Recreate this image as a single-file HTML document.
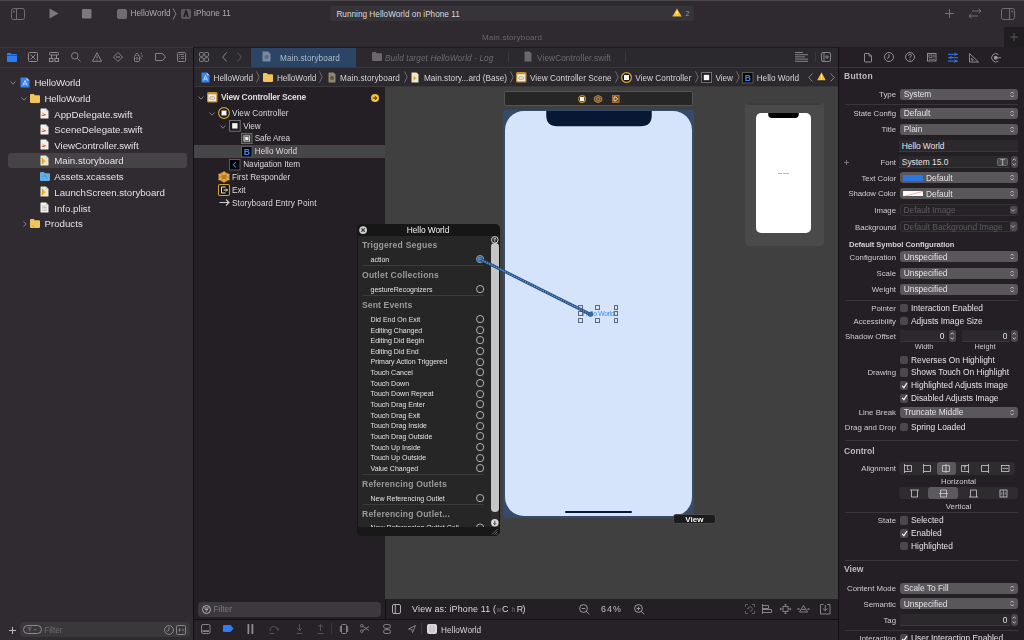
<!DOCTYPE html>
<html><head><meta charset="utf-8">
<style>
*{margin:0;padding:0;box-sizing:border-box}
html,body{width:1024px;height:640px;overflow:hidden;background:#2b292d;font-family:"Liberation Sans",sans-serif;color:#dfdddf;position:relative}
.a{position:absolute}
.t{position:absolute;white-space:pre;line-height:1}
svg{position:absolute;overflow:visible}
</style></head><body><div style="position:absolute;left:0;top:0;width:1024px;height:640px;overflow:hidden;filter:grayscale(0.0001)">
<div class="a" style="left:0px;top:0px;width:1024px;height:1px;background:#4a484b;border-radius:0px;"></div>
<div class="a" style="left:0px;top:1px;width:1024px;height:46px;background:#2e2a2f;border-radius:0px;"></div>
<div class="a" style="left:0px;top:47px;width:193px;height:593px;background:#2f2b30;border-radius:0px;"></div>
<div class="a" style="left:0px;top:47px;width:193px;height:1px;background:#3b383c;border-radius:0px;"></div>
<div class="a" style="left:0px;top:67px;width:193px;height:1px;background:#3b383c;border-radius:0px;"></div>
<div class="a" style="left:193px;top:47px;width:1px;height:593px;background:#121013;border-radius:0px;"></div>
<div class="a" style="left:194px;top:47px;width:644px;height:40px;background:#2c292e;border-radius:0px;"></div>
<div class="a" style="left:194px;top:47px;width:644px;height:1px;background:#1c1a1d;border-radius:0px;"></div>
<div class="a" style="left:194px;top:67px;width:644px;height:1px;background:#3a373b;border-radius:0px;"></div>
<div class="a" style="left:194px;top:86px;width:644px;height:1px;background:#3a373b;border-radius:0px;"></div>
<div class="a" style="left:194px;top:87px;width:191px;height:532px;background:#231f24;border-radius:0px;"></div>
<div class="a" style="left:194px;top:145px;width:191px;height:13px;background:#464547;border-radius:0px;"></div>
<div class="a" style="left:385px;top:87px;width:453px;height:512px;background:#404040;border-radius:0px;"></div>
<div class="a" style="left:385px;top:599px;width:453px;height:20px;background:#231f24;border-radius:0px;"></div>
<div class="a" style="left:385px;top:599px;width:1px;height:20px;background:#121013;border-radius:0px;"></div>
<div class="a" style="left:194px;top:619px;width:644px;height:1px;background:#121013;border-radius:0px;"></div>
<div class="a" style="left:194px;top:620px;width:644px;height:20px;background:#262227;border-radius:0px;"></div>
<div class="a" style="left:838px;top:47px;width:1px;height:593px;background:#121013;border-radius:0px;"></div>
<div class="a" style="left:839px;top:47px;width:185px;height:593px;background:#241f25;border-radius:0px;"></div>
<div class="a" style="left:839px;top:67px;width:185px;height:1px;background:#3a373b;border-radius:0px;"></div>
<svg style="left:11px;top:8px" width="14" height="12" viewBox="0 0 14 12"><rect x="0.5" y="0.5" width="13" height="11" rx="2" fill="none" stroke="#6e6c6f"/><line x1="5.5" y1="1" x2="5.5" y2="11" stroke="#6e6c6f"/><rect x="2" y="2.5" width="1.5" height="2" fill="#6e6c6f"/></svg>
<svg style="left:49px;top:8px" width="10" height="11" viewBox="0 0 10 11"><path d="M0.5 0.5 L9.5 5.5 L0.5 10.5Z" fill="#7b797c"/></svg>
<svg style="left:82px;top:9px" width="10" height="10" viewBox="0 0 10 10"><rect x="0" y="0" width="9.5" height="9.5" rx="1" fill="#7b797c"/></svg>
<svg style="left:117px;top:9px" width="10" height="10" viewBox="0 0 10 10"><rect x="0" y="0" width="10" height="10" rx="2" fill="#6f6d71"/></svg>
<div class="t" style="left:130.50px;top:10.00px;font-size:8.2px;color:#aeacaf;letter-spacing:0.031px;">HelloWorld</div>
<svg style="left:172px;top:8px" width="5" height="12" viewBox="0 0 5 12"><path d="M1 0.5 L4 6 L1 11.5" fill="none" stroke="#8a888b" stroke-width="0.9"/></svg>
<svg style="left:181px;top:9px" width="10" height="10" viewBox="0 0 10 10"><rect x="0" y="0" width="10" height="10" rx="2" fill="#5b595c"/><path d="M3 8 L5 2 L7 8" fill="none" stroke="#1e1c1f" stroke-width="1.6"/></svg>
<div class="t" style="left:194.00px;top:10.00px;font-size:8.2px;color:#aeacaf;letter-spacing:0.080px;">iPhone 11</div>
<div class="a" style="left:330px;top:6px;width:364px;height:15px;background:#363438;border-radius:3px;"></div>
<div class="t" style="left:336.40px;top:11.00px;font-size:8.2px;color:#dcdadd;letter-spacing:0.026px;">Running HelloWorld on iPhone 11</div>
<svg style="left:672px;top:8px" width="10" height="9" viewBox="0 0 10 9"><path d="M5 0.5 L9.7 8.5 L0.3 8.5Z" fill="#f0be3a"/><rect x="4.5" y="3" width="1" height="3" fill="#fff"/><rect x="4.5" y="6.8" width="1" height="1" fill="#fff"/></svg>
<div class="t" style="left:685.50px;top:10.00px;font-size:7.2px;color:#9c9a9d;">2</div>
<svg style="left:945px;top:9px" width="9" height="9" viewBox="0 0 9 9"><path d="M4.5 0 V9 M0 4.5 H9" stroke="#79777a" stroke-width="0.9"/></svg>
<svg style="left:968px;top:8px" width="14" height="11" viewBox="0 0 14 11"><path d="M4 3 H13 L10.5 0.7 M13 3 L10.5 5.3 M10 8 H1 L3.5 5.7 M1 8 L3.5 10.3" fill="none" stroke="#79777a" stroke-width="0.9"/></svg>
<svg style="left:1001px;top:8px" width="14" height="12" viewBox="0 0 14 12"><rect x="0.5" y="0.5" width="13" height="11" rx="2" fill="none" stroke="#6e6c6f"/><line x1="8.5" y1="1" x2="8.5" y2="11" stroke="#6e6c6f"/><rect x="10.3" y="2.5" width="1.5" height="2" fill="#6e6c6f"/></svg>
<div class="t" style="left:481.90px;top:34.00px;font-size:8.0px;color:#69676a;letter-spacing:0.196px;">Main.storyboard</div>
<div class="a" style="left:1004px;top:27px;width:20px;height:20px;background:#1f1d20;border-radius:0px;"></div>
<svg style="left:1010px;top:33px" width="8" height="8" viewBox="0 0 8 8"><path d="M4 0 V8 M0 4 H8" stroke="#5f5d60" stroke-width="0.9"/></svg>
<svg style="left:7px;top:53px" width="10" height="9" viewBox="0 0 10 9"><path d="M0 1 Q0 0 1 0 H3.5 L4.5 1 H9 Q10 1 10 2 V8 Q10 9 9 9 H1 Q0 9 0 8Z" fill="#2f7cf6"/><line x1="0" y1="2.5" x2="10" y2="2.5" stroke="#2d2a2e" stroke-width="0.5"/></svg>
<svg style="left:28px;top:52px" width="10" height="10" viewBox="0 0 10 10"><rect x="0.5" y="0.5" width="9" height="9" rx="1" fill="none" stroke="#8f8d90"/><path d="M2.5 2.5 L7.5 7.5 M7.5 2.5 L2.5 7.5" stroke="#8f8d90" stroke-width="0.9"/></svg>
<svg style="left:49px;top:52px" width="10" height="10" viewBox="0 0 10 10"><rect x="0.5" y="0.5" width="9" height="2.5" rx="1" fill="none" stroke="#8f8d90"/><path d="M2.5 3 V6 M7.5 3 V6" stroke="#8f8d90"/><rect x="0.5" y="6.5" width="3.5" height="3" fill="none" stroke="#8f8d90"/><rect x="6" y="6.5" width="3.5" height="3" fill="none" stroke="#8f8d90"/></svg>
<svg style="left:71px;top:52px" width="10" height="10" viewBox="0 0 10 10"><circle cx="3.8" cy="3.8" r="3.3" fill="none" stroke="#8f8d90" stroke-width="0.9"/><line x1="6.2" y1="6.2" x2="9.5" y2="9.5" stroke="#8f8d90" stroke-width="0.9"/></svg>
<svg style="left:92px;top:52px" width="10" height="10" viewBox="0 0 10 10"><path d="M5 0.7 L9.6 9.3 H0.4Z" fill="none" stroke="#8f8d90" stroke-width="0.9"/><path d="M5 3.5 V6.5 M5 7.5 V8.3" stroke="#8f8d90" stroke-width="0.9"/></svg>
<svg style="left:113px;top:52px" width="10" height="10" viewBox="0 0 10 10"><path d="M5 0.5 L9.5 5 L5 9.5 L0.5 5Z" fill="none" stroke="#8f8d90" stroke-width="0.9"/><line x1="3" y1="5" x2="7" y2="5" stroke="#8f8d90"/></svg>
<svg style="left:134px;top:51px" width="11" height="11" viewBox="0 0 11 11"><rect x="0.5" y="4.5" width="5" height="6" rx="1" fill="none" stroke="#8f8d90" stroke-width="0.9"/><path d="M2 4.5 V2.5 H4 V4.5 M6.5 3 L8 2 M7 5 H9 M6.5 7 L8 8" stroke="#8f8d90" stroke-width="0.8"/><circle cx="3" cy="7.5" r="1" fill="none" stroke="#8f8d90" stroke-width="0.7"/></svg>
<svg style="left:155px;top:53px" width="11" height="8" viewBox="0 0 11 8"><path d="M1 0.5 H7.5 L10.5 4 L7.5 7.5 H1 Q0.5 7.5 0.5 7 V1 Q0.5 0.5 1 0.5Z" fill="none" stroke="#8f8d90" stroke-width="0.9"/></svg>
<svg style="left:177px;top:52px" width="9" height="10" viewBox="0 0 9 10"><rect x="0.5" y="0.5" width="8" height="9" rx="1" fill="none" stroke="#8f8d90" stroke-width="0.9"/><path d="M2 2.5 H7 M2 4.5 H3 M4 4.5 H7 M2 6.5 H3 M4 6.5 H7" stroke="#8f8d90" stroke-width="0.8"/></svg>
<div class="a" style="left:7.5px;top:153px;width:179px;height:15px;background:#464347;border-radius:3px;"></div>
<svg style="left:10px;top:81px" width="6" height="4" viewBox="0 0 6 4"><path d="M0.5 0.5 L3 3.2 L5.5 0.5" fill="none" stroke="#8a888b" stroke-width="0.9"/></svg>
<svg style="left:20px;top:77px" width="10" height="11" viewBox="0 0 10 11"><path d="M0.5 1.2 Q0.5 0.5 1.2 0.5 H6.5 L9.5 3.5 V10 Q9.5 10.5 9 10.5 H1 Q0.5 10.5 0.5 10Z" fill="#3b82e8"/><path d="M6.5 0.5 V3.5 H9.5Z" fill="#a9c9f4"/><path d="M2.8 8.5 L5 3.5 L7.2 8.5 M3.5 7 H6.5" fill="none" stroke="#d9e8fb" stroke-width="0.8"/></svg>
<div class="t" style="left:34.50px;top:78.00px;font-size:9.7px;color:#e4e2e5;letter-spacing:-0.130px;">HelloWorld</div>
<svg style="left:20.5px;top:97px" width="6" height="4" viewBox="0 0 6 4"><path d="M0.5 0.5 L3 3.2 L5.5 0.5" fill="none" stroke="#8a888b" stroke-width="0.9"/></svg>
<svg style="left:30px;top:94px" width="10" height="9" viewBox="0 0 10 9"><path d="M0 1 Q0 0 1 0 H3.8 L4.8 1.2 H9 Q10 1.2 10 2.2 V8 Q10 9 9 9 H1 Q0 9 0 8Z" fill="#f1c55c"/></svg>
<div class="t" style="left:44.50px;top:94.00px;font-size:9.7px;color:#e4e2e5;letter-spacing:-0.130px;">HelloWorld</div>
<svg style="left:40px;top:108.0px" width="9" height="11" viewBox="0 0 9 11"><path d="M0.5 1 Q0.5 0.5 1 0.5 H6 L8.5 3 V10 Q8.5 10.5 8 10.5 H1 Q0.5 10.5 0.5 10Z" fill="#f3f1f1"/><path d="M6 0.5 V3 H8.5" fill="#c9c7c8"/><path d="M2 4 Q4.5 7 6.5 6 Q5.5 8.5 2.5 8 Q1.5 7.5 1.5 6.5 Q3 7 4 6.5 Q2.5 5.5 2 4Z" fill="#ec5a35"/></svg>
<div class="t" style="left:54.25px;top:110.00px;font-size:9.7px;color:#e4e2e5;">AppDelegate.swift</div>
<svg style="left:40px;top:123.65px" width="9" height="11" viewBox="0 0 9 11"><path d="M0.5 1 Q0.5 0.5 1 0.5 H6 L8.5 3 V10 Q8.5 10.5 8 10.5 H1 Q0.5 10.5 0.5 10Z" fill="#f3f1f1"/><path d="M6 0.5 V3 H8.5" fill="#c9c7c8"/><path d="M2 4 Q4.5 7 6.5 6 Q5.5 8.5 2.5 8 Q1.5 7.5 1.5 6.5 Q3 7 4 6.5 Q2.5 5.5 2 4Z" fill="#ec5a35"/></svg>
<div class="t" style="left:54.25px;top:125.00px;font-size:9.7px;color:#e4e2e5;">SceneDelegate.swift</div>
<svg style="left:40px;top:139.3px" width="9" height="11" viewBox="0 0 9 11"><path d="M0.5 1 Q0.5 0.5 1 0.5 H6 L8.5 3 V10 Q8.5 10.5 8 10.5 H1 Q0.5 10.5 0.5 10Z" fill="#f3f1f1"/><path d="M6 0.5 V3 H8.5" fill="#c9c7c8"/><path d="M2 4 Q4.5 7 6.5 6 Q5.5 8.5 2.5 8 Q1.5 7.5 1.5 6.5 Q3 7 4 6.5 Q2.5 5.5 2 4Z" fill="#ec5a35"/></svg>
<div class="t" style="left:54.25px;top:141.00px;font-size:9.7px;color:#e4e2e5;">ViewController.swift</div>
<svg style="left:40px;top:155.0px" width="9" height="11" viewBox="0 0 9 11"><path d="M0.5 1 Q0.5 0.5 1 0.5 H6 L8.5 3 V10 Q8.5 10.5 8 10.5 H1 Q0.5 10.5 0.5 10Z" fill="#f0e6c8"/><path d="M6 0.5 V3 H8.5" fill="#c9c7c8"/><path d="M3 4 L6 6 L3 8.5Z" fill="#e7b93c"/><rect x="2" y="3" width="1" height="6" fill="#c99a2e"/></svg>
<div class="t" style="left:54.25px;top:156.00px;font-size:9.7px;color:#e4e2e5;">Main.storyboard</div>
<svg style="left:40px;top:172px" width="10" height="9" viewBox="0 0 10 9"><path d="M0 1 Q0 0 1 0 H3.8 L4.8 1.2 H9 Q10 1.2 10 2.2 V8 Q10 9 9 9 H1 Q0 9 0 8Z" fill="#5fb0e9"/></svg>
<svg style="left:42px;top:175px" width="6" height="4" viewBox="0 0 6 4"><path d="M0.5 2 L2.5 0.5 L5.5 3" fill="none" stroke="#2c7cc0" stroke-width="0.6"/></svg>
<div class="t" style="left:54.25px;top:172.00px;font-size:9.7px;color:#e4e2e5;">Assets.xcassets</div>
<svg style="left:40px;top:186.3px" width="9" height="11" viewBox="0 0 9 11"><path d="M0.5 1 Q0.5 0.5 1 0.5 H6 L8.5 3 V10 Q8.5 10.5 8 10.5 H1 Q0.5 10.5 0.5 10Z" fill="#f0e6c8"/><path d="M6 0.5 V3 H8.5" fill="#c9c7c8"/><path d="M3 4 L6 6 L3 8.5Z" fill="#e7b93c"/><rect x="2" y="3" width="1" height="6" fill="#c99a2e"/></svg>
<div class="t" style="left:54.25px;top:188.00px;font-size:9.7px;color:#e4e2e5;letter-spacing:-0.011px;">LaunchScreen.storyboard</div>
<svg style="left:40px;top:202.0px" width="9" height="11" viewBox="0 0 9 11"><path d="M0.5 1 Q0.5 0.5 1 0.5 H6 L8.5 3 V10 Q8.5 10.5 8 10.5 H1 Q0.5 10.5 0.5 10Z" fill="#f3f1f1"/><path d="M6 0.5 V3 H8.5" fill="#c9c7c8"/><path d="M2 4 H7 M2 5.5 H7 M2 7 H7 M2 8.5 H7" stroke="#bdbbbc" stroke-width="0.8"/></svg>
<div class="t" style="left:54.25px;top:204.00px;font-size:9.7px;color:#e4e2e5;">Info.plist</div>
<svg style="left:23px;top:221px" width="4" height="6" viewBox="0 0 4 6"><path d="M0.5 0.5 L3.2 3 L0.5 5.5" fill="none" stroke="#8a888b" stroke-width="0.9"/></svg>
<svg style="left:30px;top:219px" width="10" height="9" viewBox="0 0 10 9"><path d="M0 1 Q0 0 1 0 H3.8 L4.8 1.2 H9 Q10 1.2 10 2.2 V8 Q10 9 9 9 H1 Q0 9 0 8Z" fill="#f1c55c"/></svg>
<svg style="left:32px;top:225px" width="3" height="3" viewBox="0 0 3 3"><path d="M0.5 0.5 L2 2.5" stroke="#9a7a2a" stroke-width="0.6"/></svg>
<div class="t" style="left:44.50px;top:219.00px;font-size:9.7px;color:#e4e2e5;">Products</div>
<svg style="left:9px;top:626.5px" width="7" height="7" viewBox="0 0 7 7"><path d="M3.5 0 V7 M0 3.5 H7" stroke="#bdbbbe" stroke-width="1"/></svg>
<div class="a" style="left:20px;top:622px;width:170px;height:15px;background:#3a383b;border-radius:4px;"></div>
<div class="a" style="left:23px;top:625px;width:19px;height:9px;background:none;border-radius:5px;border:1px solid #8e8c8f"></div>
<svg style="left:27px;top:627px" width="12" height="6" viewBox="0 0 12 6"><path d="M0.5 0.8 H4.5 M1.3 2.4 H3.7 M2 4 H3 M7 2 L8.3 3.3 L9.6 2" fill="none" stroke="#8e8c8f" stroke-width="0.7"/></svg>
<div class="t" style="left:44.30px;top:627.00px;font-size:8.2px;color:#6f6d70;letter-spacing:-0.001px;">Filter</div>
<svg style="left:164px;top:625px" width="10" height="10" viewBox="0 0 10 10"><circle cx="5" cy="5" r="4.4" fill="none" stroke="#9a989b" stroke-width="0.8"/><path d="M5 2 V5 L3 6.5" fill="none" stroke="#9a989b" stroke-width="0.8"/></svg>
<svg style="left:176px;top:625px" width="10" height="10" viewBox="0 0 10 10"><rect x="0.5" y="0.5" width="9" height="9" rx="1" fill="none" stroke="#9a989b" stroke-width="0.8"/><path d="M2.5 5 H4.5 M3.5 3.5 V6.5 M6 5 H8" stroke="#9a989b" stroke-width="0.8"/></svg>
<svg style="left:199px;top:52px" width="10" height="10" viewBox="0 0 10 10"><rect x="0.5" y="0.5" width="3.8" height="3.8" rx="0.8" fill="none" stroke="#8f8d90" stroke-width="0.9"/><rect x="5.7" y="0.5" width="3.8" height="3.8" rx="0.8" fill="none" stroke="#8f8d90" stroke-width="0.9"/><rect x="0.5" y="5.7" width="3.8" height="3.8" rx="0.8" fill="none" stroke="#8f8d90" stroke-width="0.9"/><rect x="5.7" y="5.7" width="3.8" height="3.8" rx="0.8" fill="none" stroke="#8f8d90" stroke-width="0.9"/></svg>
<svg style="left:222px;top:52px" width="5" height="10" viewBox="0 0 5 10"><path d="M4.5 0.5 L0.7 5 L4.5 9.5" fill="none" stroke="#8f8d90" stroke-width="0.9"/></svg>
<svg style="left:237px;top:52px" width="5" height="10" viewBox="0 0 5 10"><path d="M0.5 0.5 L4.3 5 L0.5 9.5" fill="none" stroke="#5f5d60" stroke-width="0.9"/></svg>
<div class="a" style="left:251px;top:48px;width:105px;height:19px;background:#2c4566;border-radius:0px;"></div>
<svg style="left:262px;top:51px" width="9" height="11" viewBox="0 0 9 11"><path d="M0.5 1 Q0.5 0.5 1 0.5 H6 L8.5 3 V10 Q8.5 10.5 8 10.5 H1 Q0.5 10.5 0.5 10Z" fill="#7889a0"/><circle cx="4.5" cy="6" r="2" fill="#5a6a80"/></svg>
<div class="t" style="left:280.00px;top:55.00px;font-size:8.2px;color:#b3bdca;letter-spacing:0.085px;">Main.storyboard</div>
<svg style="left:372px;top:52px" width="10" height="9" viewBox="0 0 10 9"><path d="M0 1 Q0 0 1 0 H3.8 L4.8 1.2 H9 Q10 1.2 10 2.2 V8 Q10 9 9 9 H1 Q0 9 0 8Z" fill="#6a686b"/></svg>
<div class="t" style="left:385.00px;top:55.00px;font-size:8.2px;color:#6d6b6e;letter-spacing:0.132px;font-style:italic;">Build target HelloWorld - Log</div>
<div class="a" style="left:508px;top:52px;width:1px;height:10px;background:#3b393c;border-radius:0px;"></div>
<svg style="left:524px;top:51px" width="8" height="11" viewBox="0 0 8 11"><path d="M0.5 1 Q0.5 0.5 1 0.5 H5.5 L7.5 2.5 V10 Q7.5 10.5 7 10.5 H1 Q0.5 10.5 0.5 10Z" fill="#6a686b"/></svg>
<div class="t" style="left:537.00px;top:55.00px;font-size:8.2px;color:#6d6b6e;letter-spacing:0.135px;">ViewController.swift</div>
<div class="a" style="left:625px;top:52px;width:1px;height:10px;background:#3b393c;border-radius:0px;"></div>
<svg style="left:795px;top:52px" width="13" height="10" viewBox="0 0 13 10"><path d="M0 0.5 H8 M0 2.7 H13 M0 4.9 H10 M0 7.1 H13 M0 9.3 H13" stroke="#8f8d90" stroke-width="0.9"/></svg>
<div class="a" style="left:815px;top:52px;width:1px;height:10px;background:#3b393c;border-radius:0px;"></div>
<svg style="left:821px;top:52px" width="10" height="10" viewBox="0 0 10 10"><rect x="0.5" y="0.5" width="9" height="9" rx="1.5" fill="none" stroke="#8f8d90" stroke-width="0.9"/><path d="M3 1 V9 M6 3 V7 M4 5 H8" stroke="#8f8d90" stroke-width="0.9"/></svg>
<svg style="left:200.5px;top:72px" width="9" height="11" viewBox="0 0 9 11"><path d="M0.5 1.2 Q0.5 0.5 1.2 0.5 H5.8 L8.5 3.2 V10 Q8.5 10.5 8 10.5 H1 Q0.5 10.5 0.5 10Z" fill="#3b82e8"/><path d="M5.8 0.5 V3.2 H8.5Z" fill="#a9c9f4"/><path d="M2.5 8.5 L4.5 3.5 L6.5 8.5 M3 7 H6" fill="none" stroke="#d9e8fb" stroke-width="0.8"/></svg>
<div class="t" style="left:213.60px;top:75.00px;font-size:8.2px;color:#d6d4d7;letter-spacing:-0.059px;">HelloWorld</div>
<svg style="left:255.6px;top:71px" width="4" height="12" viewBox="0 0 4 12"><path d="M0.5 0.5 L3.2 6 L0.5 11.5" fill="none" stroke="#7c7a7d" stroke-width="0.8"/></svg>
<svg style="left:263px;top:73px" width="10" height="9" viewBox="0 0 10 9"><path d="M0 1 Q0 0 1 0 H3.8 L4.8 1.2 H9 Q10 1.2 10 2.2 V8 Q10 9 9 9 H1 Q0 9 0 8Z" fill="#f1c55c"/></svg>
<div class="t" style="left:277.00px;top:75.00px;font-size:8.2px;color:#d6d4d7;letter-spacing:-0.059px;">HelloWorld</div>
<svg style="left:319px;top:71px" width="4" height="12" viewBox="0 0 4 12"><path d="M0.5 0.5 L3.2 6 L0.5 11.5" fill="none" stroke="#7c7a7d" stroke-width="0.8"/></svg>
<svg style="left:327.5px;top:72px" width="8" height="11" viewBox="0 0 8 11"><path d="M0.5 1 Q0.5 0.5 1 0.5 H5.5 L7.5 2.5 V10 Q7.5 10.5 7 10.5 H1 Q0.5 10.5 0.5 10Z" fill="#8f876f"/><circle cx="4" cy="6" r="2" fill="#5e573f"/></svg>
<div class="t" style="left:340.00px;top:75.00px;font-size:8.2px;color:#d6d4d7;letter-spacing:0.085px;">Main.storyboard</div>
<svg style="left:404px;top:71px" width="4" height="12" viewBox="0 0 4 12"><path d="M0.5 0.5 L3.2 6 L0.5 11.5" fill="none" stroke="#7c7a7d" stroke-width="0.8"/></svg>
<svg style="left:411.3px;top:72px" width="8" height="11" viewBox="0 0 8 11"><path d="M0.5 1 Q0.5 0.5 1 0.5 H5.5 L7.5 2.5 V10 Q7.5 10.5 7 10.5 H1 Q0.5 10.5 0.5 10Z" fill="#f2e8c8"/><path d="M2.5 4 L5.5 6 L2.5 8.5Z" fill="#e0a92c"/></svg>
<div class="t" style="left:423.90px;top:75.00px;font-size:8.2px;color:#d6d4d7;letter-spacing:0.039px;">Main.story...ard (Base)</div>
<svg style="left:509.6px;top:71px" width="4" height="12" viewBox="0 0 4 12"><path d="M0.5 0.5 L3.2 6 L0.5 11.5" fill="none" stroke="#7c7a7d" stroke-width="0.8"/></svg>
<svg style="left:516px;top:72px" width="10.5" height="10.5" viewBox="0 0 10.5 10.5"><rect x="0" y="0" width="10.5" height="10.5" rx="1.5" fill="#c8902a"/><rect x="1.3" y="2.3" width="7.9" height="6.9" fill="#f4efe4"/><rect x="2.8" y="4.75" width="4.9" height="2.5" rx="1" fill="none" stroke="#9b8a68" stroke-width="0.7"/></svg>
<div class="t" style="left:530.00px;top:75.00px;font-size:8.2px;color:#d6d4d7;letter-spacing:0.040px;">View Controller Scene</div>
<svg style="left:614.9px;top:71px" width="4" height="12" viewBox="0 0 4 12"><path d="M0.5 0.5 L3.2 6 L0.5 11.5" fill="none" stroke="#7c7a7d" stroke-width="0.8"/></svg>
<svg style="left:621px;top:72px" width="11" height="11" viewBox="0 0 11 11"><circle cx="5.5" cy="5.5" r="4.9" fill="#1a1816" stroke="#d8a532" stroke-width="1.2"/><rect x="3.0" y="3.0" width="5" height="5" fill="#f4f4f4"/></svg>
<div class="t" style="left:635.20px;top:75.00px;font-size:8.2px;color:#d6d4d7;letter-spacing:0.062px;">View Controller</div>
<svg style="left:695.2px;top:71px" width="4" height="12" viewBox="0 0 4 12"><path d="M0.5 0.5 L3.2 6 L0.5 11.5" fill="none" stroke="#7c7a7d" stroke-width="0.8"/></svg>
<svg style="left:701px;top:72px" width="11" height="11" viewBox="0 0 11 11"><rect x="0.5" y="0.5" width="10" height="10" fill="#1c1a1d" stroke="#707070" stroke-width="1"/><rect x="2.8" y="2.8" width="5.4" height="5.4" fill="#f4f4f4"/></svg>
<div class="t" style="left:715.40px;top:75.00px;font-size:8.2px;color:#d6d4d7;letter-spacing:-0.002px;">View</div>
<svg style="left:736.3px;top:71px" width="4" height="12" viewBox="0 0 4 12"><path d="M0.5 0.5 L3.2 6 L0.5 11.5" fill="none" stroke="#7c7a7d" stroke-width="0.8"/></svg>
<svg style="left:742.4px;top:71.5px" width="11.5" height="11.5" viewBox="0 0 11.5 11.5"><rect x="0.5" y="0.5" width="10.5" height="10.5" fill="#050505" stroke="#5a5a5a" stroke-width="1"/><text x="5.75" y="8.85" text-anchor="middle" font-family="Liberation Sans" font-size="8.6" font-weight="bold" fill="#3f83f0">B</text></svg>
<div class="t" style="left:756.70px;top:75.00px;font-size:8.2px;color:#d6d4d7;letter-spacing:0.021px;">Hello World</div>
<svg style="left:808.4px;top:73px" width="5" height="9" viewBox="0 0 5 9"><path d="M4.5 0.5 L0.7 4.5 L4.5 8.5" fill="none" stroke="#8f8d90" stroke-width="0.9"/></svg>
<svg style="left:817px;top:72px" width="9" height="9" viewBox="0 0 9 9"><path d="M4.5 0.3 L8.8 8.3 H0.2Z" fill="#f0be3a"/><rect x="4" y="2.8" width="1" height="3" fill="#fff"/><rect x="4" y="6.5" width="1" height="1" fill="#fff"/></svg>
<svg style="left:829.9px;top:73px" width="5" height="9" viewBox="0 0 5 9"><path d="M0.5 0.5 L4.3 4.5 L0.5 8.5" fill="none" stroke="#8f8d90" stroke-width="0.9"/></svg>
<svg style="left:197.5px;top:96px" width="6" height="4" viewBox="0 0 6 4"><path d="M0.5 0.5 L3 3.2 L5.5 0.5" fill="none" stroke="#8a888b" stroke-width="0.9"/></svg>
<svg style="left:207.3px;top:92px" width="10.5" height="10.5" viewBox="0 0 10.5 10.5"><rect x="0" y="0" width="10.5" height="10.5" rx="1.5" fill="#c8902a"/><rect x="1.3" y="2.3" width="7.9" height="6.9" fill="#f4efe4"/><rect x="2.8" y="4.75" width="4.9" height="2.5" rx="1" fill="none" stroke="#9b8a68" stroke-width="0.7"/></svg>
<div class="t" style="left:221.00px;top:93.00px;font-size:8.5px;color:#dcdadd;letter-spacing:-0.215px;font-weight:bold;">View Controller Scene</div>
<svg style="left:370.5px;top:93.5px" width="8" height="8" viewBox="0 0 8 8"><circle cx="4" cy="4" r="4" fill="#f0c23a"/><path d="M1.8 4 H5.5 M4 2.3 L5.8 4 L4 5.7" fill="none" stroke="#2a2520" stroke-width="1"/></svg>
<svg style="left:208.5px;top:112px" width="6" height="4" viewBox="0 0 6 4"><path d="M0.5 0.5 L3 3.2 L5.5 0.5" fill="none" stroke="#8a888b" stroke-width="0.9"/></svg>
<svg style="left:218px;top:107px" width="12" height="12" viewBox="0 0 12 12"><circle cx="6.0" cy="6.0" r="5.4" fill="#1a1816" stroke="#d8a532" stroke-width="1.2"/><rect x="3.5" y="3.5" width="5" height="5" fill="#f4f4f4"/></svg>
<div class="t" style="left:232.00px;top:110.00px;font-size:8.2px;color:#dcdadd;letter-spacing:0.088px;">View Controller</div>
<svg style="left:219.5px;top:125px" width="6" height="4" viewBox="0 0 6 4"><path d="M0.5 0.5 L3 3.2 L5.5 0.5" fill="none" stroke="#8a888b" stroke-width="0.9"/></svg>
<svg style="left:229.3px;top:120px" width="11.7" height="11.7" viewBox="0 0 11.7 11.7"><rect x="0.5" y="0.5" width="10.7" height="10.7" fill="#1c1a1d" stroke="#707070" stroke-width="1"/><rect x="3.1499999999999995" y="3.1499999999999995" width="5.4" height="5.4" fill="#f4f4f4"/></svg>
<div class="t" style="left:243.20px;top:123.00px;font-size:8.2px;color:#dcdadd;">View</div>
<svg style="left:241px;top:133px" width="11.5" height="11" viewBox="0 0 11.5 11"><rect x="0.5" y="0.5" width="10.5" height="10" fill="#3a3a3a" stroke="#6a6a6a" stroke-width="1"/><rect x="2.5" y="2.5" width="6.5" height="6" fill="#e8e8e8"/><rect x="3.8" y="3.5" width="4" height="4" fill="none" stroke="#555" stroke-width="0.8"/></svg>
<div class="t" style="left:254.70px;top:135.00px;font-size:8.2px;color:#dcdadd;letter-spacing:-0.074px;">Safe Area</div>
<svg style="left:241px;top:145.5px" width="11.5" height="11.5" viewBox="0 0 11.5 11.5"><rect x="0.5" y="0.5" width="10.5" height="10.5" fill="#050505" stroke="#5a5a5a" stroke-width="1"/><text x="5.75" y="8.85" text-anchor="middle" font-family="Liberation Sans" font-size="8.6" font-weight="bold" fill="#3f83f0">B</text></svg>
<div class="t" style="left:254.70px;top:148.00px;font-size:8.2px;color:#dcdadd;letter-spacing:0.030px;">Hello World</div>
<svg style="left:229.3px;top:158.5px" width="11.5" height="11.5" viewBox="0 0 11.5 11.5"><rect x="0.5" y="0.5" width="10.5" height="10.5" fill="#050505" stroke="#5a5a5a" stroke-width="1"/><path d="M6.8 3 L4.3 5.75 L6.8 8.5" fill="none" stroke="#3f83f0" stroke-width="1.1"/></svg>
<div class="t" style="left:243.20px;top:161.00px;font-size:8.2px;color:#dcdadd;">Navigation Item</div>
<svg style="left:218px;top:171px" width="12" height="12" viewBox="0 0 12 12"><path d="M6 0.5 L11.5 3.2 V8.8 L6 11.5 L0.5 8.8 V3.2Z" fill="#d69a38" stroke="#8a5a18" stroke-width="0.6"/><path d="M6 0.5 V11.5 M0.5 3.2 L11.5 8.8 M11.5 3.2 L0.5 8.8" stroke="#f6d28a" stroke-width="0.6"/><rect x="3.5" y="4" width="5" height="4" fill="#b57a22"/></svg>
<div class="t" style="left:232.00px;top:174.00px;font-size:8.2px;color:#dcdadd;">First Responder</div>
<svg style="left:218px;top:184px" width="12" height="12" viewBox="0 0 12 12"><rect x="0.5" y="0.5" width="11" height="11" rx="1.5" fill="#1a1816" stroke="#d39a38" stroke-width="1.1"/><path d="M7.5 3 H3.5 V9 H7.5" fill="none" stroke="#e8e0d0" stroke-width="1"/><path d="M5.5 6 H9.5 M8 4.5 L9.5 6 L8 7.5" fill="none" stroke="#e8e0d0" stroke-width="1"/></svg>
<div class="t" style="left:232.00px;top:187.00px;font-size:8.2px;color:#dcdadd;">Exit</div>
<svg style="left:218.5px;top:198.5px" width="11" height="7" viewBox="0 0 11 7"><path d="M0.5 3.5 H10 M7 0.5 L10 3.5 L7 6.5" fill="none" stroke="#d0ced1" stroke-width="1.1"/></svg>
<div class="t" style="left:232.00px;top:200.00px;font-size:8.2px;color:#dcdadd;letter-spacing:0.097px;">Storyboard Entry Point</div>
<div class="a" style="left:198px;top:602px;width:183px;height:15px;background:#3b393c;border-radius:4px;"></div>
<svg style="left:201.5px;top:605px" width="9" height="9" viewBox="0 0 9 9"><circle cx="4.5" cy="4.5" r="4" fill="none" stroke="#bdbbbe" stroke-width="0.9"/><path d="M2.3 3 H6.7 M3 4.5 H6 M3.8 6 H5.2" stroke="#bdbbbe" stroke-width="0.9"/></svg>
<div class="t" style="left:213.50px;top:606.00px;font-size:8.2px;color:#7a787b;letter-spacing:0.049px;">Filter</div>
<div class="a" style="left:504px;top:91px;width:189px;height:15px;background:#262626;border-radius:2px;border:1px solid #555555"></div>
<svg style="left:577.8px;top:94.8px" width="8.2" height="8.2" viewBox="0 0 8.2 8.2"><circle cx="4.1" cy="4.1" r="3.5" fill="#3a2e14" stroke="#b8892a" stroke-width="1.1"/><rect x="2" y="2" width="4.2" height="4.2" fill="#f6f6f6"/></svg>
<svg style="left:594.3px;top:94.8px" width="8.2" height="8.2" viewBox="0 0 8.2 8.2"><path d="M4.1 0.4 L7.8 2.3 V5.9 L4.1 7.8 L0.4 5.9 V2.3Z" fill="#6a5030" stroke="#d08a34" stroke-width="0.9"/><circle cx="4.1" cy="4.1" r="1.8" fill="none" stroke="#b0a090" stroke-width="0.7"/></svg>
<svg style="left:611.7px;top:95px" width="7.5" height="7.8" viewBox="0 0 7.5 7.8"><rect x="0.4" y="0.4" width="6.7" height="7" fill="#7a5020" stroke="#c0802c" stroke-width="0.8"/><path d="M2 2 H4 L5.5 3.9 L4 5.8 H2Z" fill="none" stroke="#ece4d8" stroke-width="0.9"/></svg>
<div class="a" style="left:503px;top:109.5px;width:191.2px;height:408.8px;background:#364b6c;border-radius:3px;"></div>
<div class="a" style="left:505px;top:111.3px;width:187.2px;height:404.7px;background:#d5e4fb;border-radius:19px;"></div>
<svg style="left:545.5px;top:111px" width="106" height="16" viewBox="0 0 105.5 16"><path d="M0 0 H105.5 V4.5 Q105.5 15.2 94.5 15.2 H11 Q0 15.2 0 4.5Z" fill="#061833"/></svg>
<div class="a" style="left:565px;top:510.5px;width:67px;height:2.4px;background:#061833;border-radius:1.2px;"></div>
<div class="a" style="left:672.6px;top:513.8px;width:43.6px;height:10.2px;background:#1b1b1b;border-radius:3px;border:1px solid #4a4a4a"></div>
<div class="t" style="left:685.35px;top:516.00px;font-size:8.0px;color:#f5f5f5;font-weight:bold;">View</div>
<div class="a" style="left:744.5px;top:103.3px;width:79.3px;height:143px;background:#4a4a4a;border-radius:4px;"></div>
<div class="a" style="left:747px;top:103.3px;width:74.3px;height:1.6px;background:#3b3b3b;border-radius:1px;"></div>
<div class="a" style="left:755.5px;top:113.3px;width:55px;height:119.7px;background:#ffffff;border-radius:5px;"></div>
<svg style="left:767.5px;top:113.3px" width="31" height="5" viewBox="0 0 30.5 5"><path d="M0 0 H30.5 V1.2 Q30.5 5 26.8 5 H3.7 Q0 5 0 1.2Z" fill="#000"/></svg>
<div class="a" style="left:777.5px;top:172.9px;width:4.5px;height:0.9px;background:#9dc0f4;border-radius:0px;"></div>
<div class="a" style="left:783px;top:172.9px;width:5.5px;height:0.9px;background:#9dc0f4;border-radius:0px;"></div>
<svg style="left:392px;top:604px" width="10" height="9.5" viewBox="0 0 10 9.5"><rect x="0.5" y="0.5" width="8" height="9" rx="1.5" fill="none" stroke="#bdbbbe" stroke-width="0.9"/><line x1="3.3" y1="1" x2="3.3" y2="9" stroke="#bdbbbe" stroke-width="0.9"/></svg>
<div class="t" style="left:412.10px;top:605.00px;font-size:8.9px;color:#dcdadd;letter-spacing:0.170px;">View as: iPhone 11 (</div>
<div class="a" style="left:356.5px;top:224px;width:143px;height:312px;background:#262626;border-radius:5px;border:1px solid #151515"></div>
<div class="a" style="left:356.5px;top:224px;width:143px;height:11.5px;background:#161616;border-radius:0px;border-radius:5px 5px 0 0"></div>
<div class="a" style="left:356.5px;top:527px;width:143px;height:9px;background:#181818;border-radius:0px;border-radius:0 0 5px 5px"></div>
<svg style="left:358.8px;top:225.8px" width="8.2" height="8.2" viewBox="0 0 8.2 8.2"><circle cx="4.1" cy="4.1" r="3.9" fill="#d0d0d0"/><path d="M2.4 2.4 L5.8 5.8 M5.8 2.4 L2.4 5.8" stroke="#3a3a3a" stroke-width="1.2"/></svg>
<div class="t" style="left:406.75px;top:226.00px;font-size:8.4px;color:#f2f2f2;letter-spacing:-0.058px;">Hello World</div>
<div class="a" style="left:490.5px;top:236px;width:8.5px;height:291px;background:#2c2c2c;border-radius:0px;"></div>
<div class="a" style="left:491px;top:243.4px;width:7.5px;height:268.4px;background:#c6c6c6;border-radius:3.75px;"></div>
<svg style="left:490.7px;top:236.2px" width="7.6" height="7.6" viewBox="0 0 7.6 7.6"><circle cx="3.8" cy="3.8" r="3.3" fill="#262626" stroke="#cfcfcf" stroke-width="1"/><path d="M3.8 5.8 V2 M2.4 3.3 L3.8 1.9 L5.2 3.3" fill="none" stroke="#cfcfcf" stroke-width="0.9"/></svg>
<svg style="left:490.7px;top:519.2px" width="7.6" height="7.6" viewBox="0 0 7.6 7.6"><circle cx="3.8" cy="3.8" r="3.8" fill="#d8d8d8"/><path d="M3.8 1.8 V5.6 M2.4 4.3 L3.8 5.7 L5.2 4.3" fill="none" stroke="#333" stroke-width="0.9"/></svg>
<svg style="left:491px;top:528px" width="7" height="7" viewBox="0 0 7 7"><path d="M6.5 1 L1 6.5 M6.5 3.5 L3.5 6.5 M6.5 5.5 L5.5 6.5" stroke="#8a8a8a" stroke-width="0.7"/></svg>
<div class="t" style="left:362.00px;top:241.00px;font-size:8.6px;color:#9a9a9a;letter-spacing:0.211px;font-weight:bold;">Triggered Segues</div>
<div class="t" style="left:370.50px;top:256.00px;font-size:7.0px;color:#e2e2e2;">action</div>
<svg style="left:475.8px;top:255.00000000000003px" width="8.2" height="8.2" viewBox="0 0 8.2 8.2"><circle cx="4.1" cy="4.1" r="3.6" fill="#2a2a2a" stroke="#b0b0b0" stroke-width="0.9"/><circle cx="4.1" cy="4.1" r="2.6" fill="#3d8ff0"/></svg>
<div class="a" style="left:362.5px;top:265px;width:121.5px;height:0.8px;background:#3c3c3c;border-radius:0px;"></div>
<div class="t" style="left:362.00px;top:271.00px;font-size:8.6px;color:#9a9a9a;letter-spacing:0.193px;font-weight:bold;">Outlet Collections</div>
<div class="t" style="left:370.50px;top:286.00px;font-size:7.0px;color:#e2e2e2;letter-spacing:-0.015px;">gestureRecognizers</div>
<svg style="left:475.8px;top:285.2px" width="8.2" height="8.2" viewBox="0 0 8.2 8.2"><circle cx="4.1" cy="4.1" r="3.6" fill="none" stroke="#c2c2c2" stroke-width="0.9"/></svg>
<div class="a" style="left:362.5px;top:295.2px;width:121.5px;height:0.8px;background:#3c3c3c;border-radius:0px;"></div>
<div class="t" style="left:362.00px;top:301.00px;font-size:8.6px;color:#9a9a9a;letter-spacing:0.118px;font-weight:bold;">Sent Events</div>
<div class="t" style="left:370.50px;top:316.00px;font-size:7.0px;color:#e2e2e2;">Did End On Exit</div>
<svg style="left:475.8px;top:315.15px" width="8.2" height="8.2" viewBox="0 0 8.2 8.2"><circle cx="4.1" cy="4.1" r="3.6" fill="none" stroke="#c2c2c2" stroke-width="0.9"/></svg>
<div class="t" style="left:370.50px;top:327.00px;font-size:7.0px;color:#e2e2e2;">Editing Changed</div>
<svg style="left:475.8px;top:325.81px" width="8.2" height="8.2" viewBox="0 0 8.2 8.2"><circle cx="4.1" cy="4.1" r="3.6" fill="none" stroke="#c2c2c2" stroke-width="0.9"/></svg>
<div class="t" style="left:370.50px;top:337.00px;font-size:7.0px;color:#e2e2e2;">Editing Did Begin</div>
<svg style="left:475.8px;top:336.46999999999997px" width="8.2" height="8.2" viewBox="0 0 8.2 8.2"><circle cx="4.1" cy="4.1" r="3.6" fill="none" stroke="#c2c2c2" stroke-width="0.9"/></svg>
<div class="t" style="left:370.50px;top:348.00px;font-size:7.0px;color:#e2e2e2;">Editing Did End</div>
<svg style="left:475.8px;top:347.13px" width="8.2" height="8.2" viewBox="0 0 8.2 8.2"><circle cx="4.1" cy="4.1" r="3.6" fill="none" stroke="#c2c2c2" stroke-width="0.9"/></svg>
<div class="t" style="left:370.50px;top:358.00px;font-size:7.0px;color:#e2e2e2;">Primary Action Triggered</div>
<svg style="left:475.8px;top:357.78999999999996px" width="8.2" height="8.2" viewBox="0 0 8.2 8.2"><circle cx="4.1" cy="4.1" r="3.6" fill="none" stroke="#c2c2c2" stroke-width="0.9"/></svg>
<div class="t" style="left:370.50px;top:369.00px;font-size:7.0px;color:#e2e2e2;">Touch Cancel</div>
<svg style="left:475.8px;top:368.45px" width="8.2" height="8.2" viewBox="0 0 8.2 8.2"><circle cx="4.1" cy="4.1" r="3.6" fill="none" stroke="#c2c2c2" stroke-width="0.9"/></svg>
<div class="t" style="left:370.50px;top:380.00px;font-size:7.0px;color:#e2e2e2;">Touch Down</div>
<svg style="left:475.8px;top:379.10999999999996px" width="8.2" height="8.2" viewBox="0 0 8.2 8.2"><circle cx="4.1" cy="4.1" r="3.6" fill="none" stroke="#c2c2c2" stroke-width="0.9"/></svg>
<div class="t" style="left:370.50px;top:390.00px;font-size:7.0px;color:#e2e2e2;">Touch Down Repeat</div>
<svg style="left:475.8px;top:389.77px" width="8.2" height="8.2" viewBox="0 0 8.2 8.2"><circle cx="4.1" cy="4.1" r="3.6" fill="none" stroke="#c2c2c2" stroke-width="0.9"/></svg>
<div class="t" style="left:370.50px;top:401.00px;font-size:7.0px;color:#e2e2e2;">Touch Drag Enter</div>
<svg style="left:475.8px;top:400.42999999999995px" width="8.2" height="8.2" viewBox="0 0 8.2 8.2"><circle cx="4.1" cy="4.1" r="3.6" fill="none" stroke="#c2c2c2" stroke-width="0.9"/></svg>
<div class="t" style="left:370.50px;top:412.00px;font-size:7.0px;color:#e2e2e2;">Touch Drag Exit</div>
<svg style="left:475.8px;top:411.09px" width="8.2" height="8.2" viewBox="0 0 8.2 8.2"><circle cx="4.1" cy="4.1" r="3.6" fill="none" stroke="#c2c2c2" stroke-width="0.9"/></svg>
<div class="t" style="left:370.50px;top:422.00px;font-size:7.0px;color:#e2e2e2;">Touch Drag Inside</div>
<svg style="left:475.8px;top:421.75px" width="8.2" height="8.2" viewBox="0 0 8.2 8.2"><circle cx="4.1" cy="4.1" r="3.6" fill="none" stroke="#c2c2c2" stroke-width="0.9"/></svg>
<div class="t" style="left:370.50px;top:433.00px;font-size:7.0px;color:#e2e2e2;">Touch Drag Outside</div>
<svg style="left:475.8px;top:432.40999999999997px" width="8.2" height="8.2" viewBox="0 0 8.2 8.2"><circle cx="4.1" cy="4.1" r="3.6" fill="none" stroke="#c2c2c2" stroke-width="0.9"/></svg>
<div class="t" style="left:370.50px;top:444.00px;font-size:7.0px;color:#e2e2e2;">Touch Up Inside</div>
<svg style="left:475.8px;top:443.07px" width="8.2" height="8.2" viewBox="0 0 8.2 8.2"><circle cx="4.1" cy="4.1" r="3.6" fill="none" stroke="#c2c2c2" stroke-width="0.9"/></svg>
<div class="t" style="left:370.50px;top:454.00px;font-size:7.0px;color:#e2e2e2;">Touch Up Outside</div>
<svg style="left:475.8px;top:453.73px" width="8.2" height="8.2" viewBox="0 0 8.2 8.2"><circle cx="4.1" cy="4.1" r="3.6" fill="none" stroke="#c2c2c2" stroke-width="0.9"/></svg>
<div class="t" style="left:370.50px;top:465.00px;font-size:7.0px;color:#e2e2e2;">Value Changed</div>
<svg style="left:475.8px;top:464.39px" width="8.2" height="8.2" viewBox="0 0 8.2 8.2"><circle cx="4.1" cy="4.1" r="3.6" fill="none" stroke="#c2c2c2" stroke-width="0.9"/></svg>
<div class="a" style="left:362.5px;top:474.3px;width:121.5px;height:0.8px;background:#3c3c3c;border-radius:0px;"></div>
<div class="t" style="left:362.00px;top:480.00px;font-size:8.6px;color:#9a9a9a;letter-spacing:0.175px;font-weight:bold;">Referencing Outlets</div>
<div class="t" style="left:370.50px;top:495.00px;font-size:7.0px;color:#e2e2e2;">New Referencing Outlet</div>
<svg style="left:475.8px;top:494.2px" width="8.2" height="8.2" viewBox="0 0 8.2 8.2"><circle cx="4.1" cy="4.1" r="3.6" fill="none" stroke="#c2c2c2" stroke-width="0.9"/></svg>
<div class="a" style="left:362.5px;top:504px;width:121.5px;height:0.8px;background:#3c3c3c;border-radius:0px;"></div>
<div class="t" style="left:362.00px;top:510.00px;font-size:8.6px;color:#9a9a9a;letter-spacing:0.188px;font-weight:bold;">Referencing Outlet...</div>
<div class="t" style="left:370.50px;top:524.00px;font-size:7.0px;color:#e2e2e2;clip-path:inset(0 0 3.5px 0);">New Referencing Outlet Coll</div>
<svg style="left:475.8px;top:523.5px" width="8.2" height="4" viewBox="0 0 8.2 4"><path d="M0.5 3.6 A3.6 3.6 0 0 1 7.7 3.6" fill="none" stroke="#c2c2c2" stroke-width="0.9"/></svg>
<div class="a" style="left:356.5px;top:527px;width:134px;height:9px;background:#181818;border-radius:0px;border-radius:0 0 0 5px"></div>
<div class="t" style="left:582.75px;top:311.00px;font-size:6.8px;color:#3d8cf5;letter-spacing:-0.320px;">Hello World</div>
<div class="a" style="left:578.2px;top:305.1px;width:4.8px;height:4.8px;background:rgba(213,228,251,0.5);border-radius:0.5px;border:1px solid #5d6676"></div>
<div class="a" style="left:578.2px;top:311.20000000000005px;width:4.8px;height:4.8px;background:rgba(213,228,251,0.5);border-radius:0.5px;border:1px solid #5d6676"></div>
<div class="a" style="left:578.2px;top:317.8px;width:4.8px;height:4.8px;background:rgba(213,228,251,0.5);border-radius:0.5px;border:1px solid #5d6676"></div>
<div class="a" style="left:595.1px;top:305.1px;width:4.8px;height:4.8px;background:rgba(213,228,251,0.5);border-radius:0.5px;border:1px solid #5d6676"></div>
<div class="a" style="left:595.1px;top:317.8px;width:4.8px;height:4.8px;background:rgba(213,228,251,0.5);border-radius:0.5px;border:1px solid #5d6676"></div>
<div class="a" style="left:613.6px;top:305.1px;width:4.8px;height:4.8px;background:rgba(213,228,251,0.5);border-radius:0.5px;border:1px solid #5d6676"></div>
<div class="a" style="left:613.6px;top:311.20000000000005px;width:4.8px;height:4.8px;background:rgba(213,228,251,0.5);border-radius:0.5px;border:1px solid #5d6676"></div>
<div class="a" style="left:613.6px;top:317.8px;width:4.8px;height:4.8px;background:rgba(213,228,251,0.5);border-radius:0.5px;border:1px solid #5d6676"></div>
<div class="t" style="left:496.60px;top:607.00px;font-size:6.6px;color:#6f6d70;">w</div>
<div class="t" style="left:502.00px;top:605.00px;font-size:8.9px;color:#dcdadd;">C</div>
<div class="t" style="left:511.80px;top:607.00px;font-size:6.6px;color:#6f6d70;">h</div>
<div class="t" style="left:516.70px;top:605.00px;font-size:8.9px;color:#dcdadd;letter-spacing:-0.537px;">R)</div>
<svg style="left:579px;top:604px" width="11" height="11" viewBox="0 0 11 11"><circle cx="4.5" cy="4.5" r="3.9" fill="none" stroke="#a9a7aa" stroke-width="0.9"/><path d="M2.7 4.5 H6.3 M7.3 7.3 L10.3 10.3" stroke="#a9a7aa" stroke-width="0.9"/></svg>
<div class="t" style="left:601.00px;top:605.00px;font-size:8.9px;color:#c4c2c5;letter-spacing:1.078px;">64%</div>
<svg style="left:634px;top:604px" width="11" height="11" viewBox="0 0 11 11"><circle cx="4.5" cy="4.5" r="3.9" fill="none" stroke="#a9a7aa" stroke-width="0.9"/><path d="M2.7 4.5 H6.3 M4.5 2.7 V6.3 M7.3 7.3 L10.3 10.3" stroke="#a9a7aa" stroke-width="0.9"/></svg>
<svg style="left:744.5px;top:604px" width="10" height="10" viewBox="0 0 10 10"><path d="M0.5 3 V0.5 H3 M7 0.5 H9.5 V3 M9.5 7 V9.5 H7 M3 9.5 H0.5 V7" fill="none" stroke="#6f6d70" stroke-width="0.8"/><path d="M3 5 A2.2 2.2 0 1 1 5 7.2 M3 5 L2.2 4 M3 5 L4 4.3" fill="none" stroke="#6f6d70" stroke-width="0.8"/></svg>
<svg style="left:762px;top:604px" width="10" height="10" viewBox="0 0 10 10"><path d="M0.5 0 V10 M0.5 1.5 H6.5 V4.5 H0.5 M0.5 5.5 H9.5 V8.5 H0.5" fill="none" stroke="#8f8d90" stroke-width="0.9"/></svg>
<svg style="left:780px;top:604px" width="11" height="10" viewBox="0 0 11 10"><rect x="3" y="2.5" width="5" height="5" fill="none" stroke="#8f8d90" stroke-width="0.9"/><path d="M5.5 0 V2.5 M5.5 7.5 V10 M0 5 H3 M8 5 H11 M4.3 0.5 H6.7 M4.3 9.5 H6.7 M0.5 3.8 V6.2 M10.5 3.8 V6.2" fill="none" stroke="#8f8d90" stroke-width="0.8"/></svg>
<svg style="left:798px;top:604px" width="11" height="10" viewBox="0 0 11 10"><path d="M5.5 1.5 L9.5 8 H1.5Z M3.5 5.5 H7.5" fill="none" stroke="#8f8d90" stroke-width="0.9"/><path d="M0 5 H1.8 M9.2 5 H11 M0 4 V6 M11 4 V6" stroke="#8f8d90" stroke-width="0.8"/></svg>
<svg style="left:820px;top:603.5px" width="10.5" height="10.5" viewBox="0 0 10.5 10.5"><path d="M3.5 0.5 H0.5 V10 H10 V0.5 H7" fill="none" stroke="#8f8d90" stroke-width="0.9"/><path d="M5.25 1 V6.5 M3 4.5 L5.25 6.7 L7.5 4.5" fill="none" stroke="#8f8d90" stroke-width="0.9"/></svg>
<svg style="left:201px;top:623.5px" width="9.5" height="10" viewBox="0 0 9.5 10"><rect x="0.5" y="0.5" width="8.5" height="9" rx="1.5" fill="none" stroke="#8f8d90" stroke-width="0.9"/><rect x="1.5" y="6.3" width="6.5" height="1.6" fill="#8f8d90"/></svg>
<svg style="left:223px;top:625px" width="10.5" height="7" viewBox="0 0 10.5 7"><path d="M0 1 Q0 0 1 0 H7.5 L10.5 3.5 L7.5 7 H1 Q0 7 0 6Z" fill="#2f7cf6"/></svg>
<svg style="left:247px;top:624px" width="7" height="10" viewBox="0 0 7 10"><rect x="0.5" y="0" width="1.8" height="10" rx="0.6" fill="#8f8d90"/><rect x="4.5" y="0" width="1.8" height="10" rx="0.6" fill="#8f8d90"/></svg>
<svg style="left:269px;top:624.5px" width="10" height="9" viewBox="0 0 10 9"><path d="M1 6 Q1 1.5 5 1.5 Q8.5 1.5 9 5 M7.5 3.8 L9 5.3 L10 3.5 M0.5 8.5 H5" fill="none" stroke="#59575a" stroke-width="0.9"/></svg>
<svg style="left:296px;top:624px" width="7" height="10" viewBox="0 0 7 10"><path d="M3.5 0 V6.5 M1 4 L3.5 6.5 L6 4 M0.5 9.5 H6.5" fill="none" stroke="#59575a" stroke-width="0.9"/></svg>
<svg style="left:317px;top:624px" width="7" height="10" viewBox="0 0 7 10"><path d="M3.5 7 V0.5 M1 3 L3.5 0.5 L6 3 M0.5 9.5 H6.5" fill="none" stroke="#59575a" stroke-width="0.9"/></svg>
<div class="a" style="left:331px;top:623px;width:1px;height:11px;background:#3b393c;border-radius:0px;"></div>
<svg style="left:340px;top:623.5px" width="8" height="10" viewBox="0 0 8 10"><rect x="1.5" y="0.5" width="5" height="9" rx="1" fill="none" stroke="#8f8d90" stroke-width="0.9"/><path d="M0.3 2 V8 M7.7 2 V8" stroke="#8f8d90" stroke-width="0.9"/></svg>
<svg style="left:360px;top:624px" width="9" height="9" viewBox="0 0 9 9"><circle cx="1.8" cy="1.8" r="1.3" fill="none" stroke="#8f8d90" stroke-width="0.8"/><circle cx="1.8" cy="7.2" r="1.3" fill="none" stroke="#8f8d90" stroke-width="0.8"/><path d="M3 2.5 L9 6.5 M3 6.5 L9 2.5" stroke="#8f8d90" stroke-width="0.8"/></svg>
<svg style="left:383px;top:623.5px" width="8" height="10" viewBox="0 0 8 10"><rect x="0.5" y="0.5" width="7" height="3.8" rx="1.9" fill="none" stroke="#8f8d90" stroke-width="0.9"/><rect x="0.5" y="5.7" width="7" height="3.8" rx="1.9" fill="none" stroke="#8f8d90" stroke-width="0.9"/><path d="M4 4.3 V5.7" stroke="#8f8d90"/></svg>
<svg style="left:408px;top:624.5px" width="8" height="8" viewBox="0 0 8 8"><path d="M0.5 4 L7.5 0.5 L4.5 7.5 L3.8 4.5Z" fill="none" stroke="#8f8d90" stroke-width="0.9"/></svg>
<div class="a" style="left:421px;top:623px;width:1px;height:11px;background:#3b393c;border-radius:0px;"></div>
<svg style="left:427px;top:624px" width="10" height="10" viewBox="0 0 10 10"><rect x="0" y="0" width="10" height="10" rx="2" fill="#d9d7d9"/><path d="M2 3 H8 M2 5 H8 M2 7 H8 M3.5 1.5 V8.5 M6.5 1.5 V8.5" stroke="#b0aeb0" stroke-width="0.5"/></svg>
<div class="t" style="left:441.00px;top:627.00px;font-size:8.2px;color:#d6d4d7;letter-spacing:0.031px;">HelloWorld</div>
<svg style="left:0;top:0" width="1024" height="640"><line x1="480" y1="259.2" x2="590.5" y2="314.3" stroke="#26466c" stroke-width="3"/><line x1="480" y1="259.2" x2="590.5" y2="314.3" stroke="#4f98ea" stroke-width="1.4" stroke-dasharray="1.6 0.9"/><circle cx="590.5" cy="314.3" r="2.3" fill="#2f6fba" stroke="#26466c" stroke-width="0.6"/></svg>
<svg style="left:864px;top:52.5px" width="8" height="9.5" viewBox="0 0 8 9.5"><path d="M0.5 1 Q0.5 0.5 1 0.5 H5 L7.5 3 V8.5 Q7.5 9 7 9 H1 Q0.5 9 0.5 8.5Z" fill="none" stroke="#9a989b" stroke-width="0.9"/><path d="M5 0.5 V3 H7.5" fill="none" stroke="#9a989b" stroke-width="0.8"/></svg>
<svg style="left:884px;top:52px" width="10" height="10" viewBox="0 0 10 10"><circle cx="5" cy="5" r="4.5" fill="none" stroke="#9a989b" stroke-width="0.9"/><path d="M5 2 V5.2 L3 6.5" fill="none" stroke="#9a989b" stroke-width="0.9"/></svg>
<svg style="left:905px;top:52px" width="10" height="10" viewBox="0 0 10 10"><circle cx="5" cy="5" r="4.5" fill="none" stroke="#9a989b" stroke-width="0.9"/><path d="M3.5 3.8 Q3.5 2.3 5 2.3 Q6.5 2.3 6.5 3.6 Q6.5 4.5 5 5.2 V6" fill="none" stroke="#9a989b" stroke-width="0.9"/><circle cx="5" cy="7.6" r="0.6" fill="#9a989b"/></svg>
<svg style="left:927px;top:53px" width="9.5" height="8.5" viewBox="0 0 9.5 8.5"><rect x="0.5" y="0.5" width="8.5" height="7.5" fill="none" stroke="#9a989b" stroke-width="0.9"/><rect x="2" y="2" width="3" height="2.5" fill="none" stroke="#9a989b" stroke-width="0.7"/><path d="M6 2.3 H8 M6 3.8 H8 M2 6.3 H8" stroke="#9a989b" stroke-width="0.7"/></svg>
<svg style="left:948px;top:52.5px" width="10" height="9.5" viewBox="0 0 10 9.5"><path d="M0 1.3 H10 M0 4.7 H10 M0 8.1 H10" stroke="#2f7cf6" stroke-width="1"/><path d="M6.5 0 L8.5 1.3 L6.5 2.6 M3.5 3.4 L1.5 4.7 L3.5 6 M6.5 6.8 L8.5 8.1 L6.5 9.4" fill="none" stroke="#2f7cf6" stroke-width="1"/></svg>
<svg style="left:969px;top:52.5px" width="10" height="9.5" viewBox="0 0 10 9.5"><path d="M0.5 0.5 V9 H9.5Z" fill="none" stroke="#9a989b" stroke-width="0.9"/><path d="M2.5 5 V7.2 H4.7Z" fill="none" stroke="#9a989b" stroke-width="0.7"/></svg>
<svg style="left:990.5px;top:52.5px" width="10" height="9.5" viewBox="0 0 10 9.5"><path d="M7.5 1.5 A4.2 4.2 0 1 0 7.5 8" fill="none" stroke="#9a989b" stroke-width="0.9"/><circle cx="4.7" cy="4.75" r="1.9" fill="#9a989b"/><path d="M5 4.75 H10" stroke="#9a989b" stroke-width="0.9"/></svg>
<div class="t" style="left:844.00px;top:72.00px;font-size:8.5px;color:#bcbabd;letter-spacing:0.268px;font-weight:bold;">Button</div>
<div class="t" style="left:879.09px;top:91.00px;font-size:7.8px;color:#cfcdd0;">Type</div>
<div class="a" style="left:899.8px;top:88.9px;width:118.20000000000005px;height:11.099999999999994px;background:#59575a;border-radius:3px;"></div>
<svg style="left:1010.2px;top:91.05px" width="4.5" height="7" viewBox="0 0 4.5 7"><path d="M0.7 2.6 L2.25 1 L3.8 2.6 M0.7 4.4 L2.25 6 L3.8 4.4" fill="none" stroke="#e0dee1" stroke-width="0.8"/></svg>
<div class="t" style="left:903.70px;top:90.00px;font-size:8.4px;color:#e4e2e5;letter-spacing:-0.073px;">System</div>
<div class="a" style="left:845px;top:104px;width:173px;height:1px;background:#39363a;border-radius:0px;"></div>
<div class="t" style="left:853.40px;top:110.00px;font-size:7.8px;color:#cfcdd0;letter-spacing:-0.027px;">State Config</div>
<div class="a" style="left:899.8px;top:108.2px;width:118.20000000000005px;height:11.099999999999994px;background:#59575a;border-radius:3px;"></div>
<svg style="left:1010.2px;top:110.35px" width="4.5" height="7" viewBox="0 0 4.5 7"><path d="M0.7 2.6 L2.25 1 L3.8 2.6 M0.7 4.4 L2.25 6 L3.8 4.4" fill="none" stroke="#e0dee1" stroke-width="0.8"/></svg>
<div class="t" style="left:903.70px;top:109.00px;font-size:8.4px;color:#e4e2e5;">Default</div>
<div class="t" style="left:881.55px;top:126.00px;font-size:7.8px;color:#cfcdd0;">Title</div>
<div class="a" style="left:899.8px;top:124px;width:118.20000000000005px;height:11px;background:#59575a;border-radius:3px;"></div>
<svg style="left:1010.2px;top:126.1px" width="4.5" height="7" viewBox="0 0 4.5 7"><path d="M0.7 2.6 L2.25 1 L3.8 2.6 M0.7 4.4 L2.25 6 L3.8 4.4" fill="none" stroke="#e0dee1" stroke-width="0.8"/></svg>
<div class="t" style="left:903.70px;top:125.00px;font-size:8.4px;color:#e4e2e5;">Plain</div>
<div class="a" style="left:899.4px;top:140.2px;width:118.60000000000002px;height:11.600000000000023px;background:#2b292c;border-radius:1px;border-bottom:1px solid #3a383b"></div>
<div class="t" style="left:901.80px;top:142.00px;font-size:8.4px;color:#e4e2e5;letter-spacing:-0.058px;">Hello World</div>
<svg style="left:843.5px;top:159.5px" width="5" height="5" viewBox="0 0 5 5"><path d="M2.5 0 V5 M0 2.5 H5" stroke="#8a888b" stroke-width="0.8"/></svg>
<div class="t" style="left:880.39px;top:159.00px;font-size:7.8px;color:#cfcdd0;">Font</div>
<div class="a" style="left:899.4px;top:156.3px;width:110.39999999999998px;height:11.299999999999983px;background:#2b292c;border-radius:1px;border-bottom:1px solid #3a383b"></div>
<div class="t" style="left:901.80px;top:158.00px;font-size:8.4px;color:#e4e2e5;">System 15.0</div>
<div class="a" style="left:997px;top:157.8px;width:11px;height:8.6px;background:#4a484b;border-radius:1.5px;border:1px solid #6a686b"></div>
<svg style="left:999px;top:159px" width="7" height="6" viewBox="0 0 7 6"><text x="3.5" y="5.6" text-anchor="middle" font-family="Liberation Serif" font-size="7.5" fill="#d8d6d9">T</text></svg>
<div class="a" style="left:1010.8px;top:156.3px;width:7.5px;height:11.299999999999983px;background:#4a484b;border-radius:3px;"></div>
<svg style="left:1012.3px;top:157.95px" width="4.5" height="8" viewBox="0 0 4.5 8"><path d="M0.6 2.4 L2.25 0.9 L3.9 2.4 M0.6 5.6 L2.25 7.1 L3.9 5.6" fill="none" stroke="#d6d4d7" stroke-width="0.8"/></svg>
<div class="t" style="left:861.40px;top:175.00px;font-size:7.8px;color:#cfcdd0;letter-spacing:-0.051px;">Text Color</div>
<div class="a" style="left:899.8px;top:172.2px;width:118.20000000000005px;height:11.300000000000011px;background:#59575a;border-radius:3px;"></div>
<svg style="left:1010.2px;top:174.45px" width="4.5" height="7" viewBox="0 0 4.5 7"><path d="M0.7 2.6 L2.25 1 L3.8 2.6 M0.7 4.4 L2.25 6 L3.8 4.4" fill="none" stroke="#e0dee1" stroke-width="0.8"/></svg>
<div class="a" style="left:903px;top:174.9px;width:20.3px;height:5.8px;background:#2d78e0;border-radius:0.5px;"></div>
<div class="t" style="left:926.00px;top:174.00px;font-size:8.4px;color:#e4e2e5;">Default</div>
<div class="t" style="left:848.40px;top:190.00px;font-size:7.8px;color:#cfcdd0;letter-spacing:-0.115px;">Shadow Color</div>
<div class="a" style="left:899.8px;top:187.7px;width:118.20000000000005px;height:11.300000000000011px;background:#59575a;border-radius:3px;"></div>
<svg style="left:1010.2px;top:189.95px" width="4.5" height="7" viewBox="0 0 4.5 7"><path d="M0.7 2.6 L2.25 1 L3.8 2.6 M0.7 4.4 L2.25 6 L3.8 4.4" fill="none" stroke="#e0dee1" stroke-width="0.8"/></svg>
<div class="a" style="left:903px;top:190.5px;width:20.3px;height:5.8px;background:#ffffff;border-radius:0.5px;"></div>
<svg style="left:903px;top:190.5px" width="20.3" height="5.8" viewBox="0 0 20.3 5.8"><line x1="0.5" y1="5.5" x2="20" y2="0.3" stroke="#e06060" stroke-width="0.5"/></svg>
<div class="t" style="left:926.00px;top:190.00px;font-size:8.4px;color:#e4e2e5;">Default</div>
<div class="t" style="left:874.33px;top:207.00px;font-size:7.8px;color:#cfcdd0;">Image</div>
<div class="a" style="left:899.7px;top:204.1px;width:118.3px;height:11.7px;background:#262327;border-radius:3px;border:1px solid #343235"></div>
<div class="t" style="left:903.50px;top:206.00px;font-size:8.4px;color:#5d5b5e;">Default Image</div>
<div class="a" style="left:1009.8px;top:205.5px;width:7.2px;height:8.8px;background:#4e4c4f;border-radius:2px;"></div>
<svg style="left:1011.4px;top:208.5px" width="4" height="3" viewBox="0 0 4 3"><path d="M0.3 0.5 L2 2.3 L3.7 0.5" fill="none" stroke="#bebcbf" stroke-width="0.8"/></svg>
<div class="t" style="left:855.00px;top:224.00px;font-size:7.8px;color:#cfcdd0;letter-spacing:-0.062px;">Background</div>
<div class="a" style="left:899.7px;top:221px;width:118.3px;height:11.3px;background:#262327;border-radius:3px;border:1px solid #343235"></div>
<div class="t" style="left:903.50px;top:223.00px;font-size:8.4px;color:#5d5b5e;">Default Background Image</div>
<div class="a" style="left:1009.8px;top:222.3px;width:7.2px;height:8.8px;background:#4e4c4f;border-radius:2px;"></div>
<svg style="left:1011.4px;top:225.3px" width="4" height="3" viewBox="0 0 4 3"><path d="M0.3 0.5 L2 2.3 L3.7 0.5" fill="none" stroke="#bebcbf" stroke-width="0.8"/></svg>
<div class="t" style="left:849.00px;top:241.00px;font-size:7.6px;color:#d0ced1;letter-spacing:-0.063px;font-weight:bold;">Default Symbol Configuration</div>
<div class="t" style="left:849.61px;top:254.00px;font-size:7.8px;color:#cfcdd0;">Configuration</div>
<div class="a" style="left:899.8px;top:251.3px;width:118.20000000000005px;height:10.699999999999989px;background:#59575a;border-radius:3px;"></div>
<svg style="left:1010.2px;top:253.24999999999997px" width="4.5" height="7" viewBox="0 0 4.5 7"><path d="M0.7 2.6 L2.25 1 L3.8 2.6 M0.7 4.4 L2.25 6 L3.8 4.4" fill="none" stroke="#e0dee1" stroke-width="0.8"/></svg>
<div class="t" style="left:903.70px;top:253.00px;font-size:8.4px;color:#e4e2e5;">Unspecified</div>
<div class="t" style="left:876.48px;top:270.00px;font-size:7.8px;color:#cfcdd0;">Scale</div>
<div class="a" style="left:899.8px;top:268px;width:118.20000000000005px;height:11px;background:#59575a;border-radius:3px;"></div>
<svg style="left:1010.2px;top:270.1px" width="4.5" height="7" viewBox="0 0 4.5 7"><path d="M0.7 2.6 L2.25 1 L3.8 2.6 M0.7 4.4 L2.25 6 L3.8 4.4" fill="none" stroke="#e0dee1" stroke-width="0.8"/></svg>
<div class="t" style="left:903.70px;top:269.00px;font-size:8.4px;color:#e4e2e5;">Unspecified</div>
<div class="t" style="left:871.86px;top:286.00px;font-size:7.8px;color:#cfcdd0;">Weight</div>
<div class="a" style="left:899.8px;top:284px;width:118.20000000000005px;height:10.800000000000011px;background:#59575a;border-radius:3px;"></div>
<svg style="left:1010.2px;top:286.0px" width="4.5" height="7" viewBox="0 0 4.5 7"><path d="M0.7 2.6 L2.25 1 L3.8 2.6 M0.7 4.4 L2.25 6 L3.8 4.4" fill="none" stroke="#e0dee1" stroke-width="0.8"/></svg>
<div class="t" style="left:903.70px;top:285.00px;font-size:8.4px;color:#e4e2e5;">Unspecified</div>
<div class="a" style="left:845px;top:299.5px;width:173px;height:1px;background:#39363a;border-radius:0px;"></div>
<div class="t" style="left:871.28px;top:305.00px;font-size:7.8px;color:#cfcdd0;">Pointer</div>
<div class="a" style="left:899.7px;top:303.8px;width:8.4px;height:8.4px;background:#4a484b;border-radius:2px;"></div>
<div class="t" style="left:911.00px;top:304.00px;font-size:8.4px;color:#e4e2e5;letter-spacing:-0.009px;">Interaction Enabled</div>
<div class="t" style="left:853.53px;top:318.00px;font-size:7.8px;color:#cfcdd0;">Accessibility</div>
<div class="a" style="left:899.7px;top:317.0px;width:8.4px;height:8.4px;background:#4a484b;border-radius:2px;"></div>
<div class="t" style="left:911.00px;top:317.00px;font-size:8.4px;color:#e4e2e5;">Adjusts Image Size</div>
<div class="t" style="left:845.00px;top:333.00px;font-size:7.8px;color:#cfcdd0;">Shadow Offset</div>
<div class="a" style="left:899.7px;top:330px;width:47.299999999999955px;height:11.699999999999989px;background:#2b292c;border-radius:1px;border-bottom:1px solid #3a383b"></div>
<div class="a" style="left:948.8px;top:330px;width:7.5px;height:11.699999999999989px;background:#4a484b;border-radius:3px;"></div>
<svg style="left:950.3px;top:331.85px" width="4.5" height="8" viewBox="0 0 4.5 8"><path d="M0.6 2.4 L2.25 0.9 L3.9 2.4 M0.6 5.6 L2.25 7.1 L3.9 5.6" fill="none" stroke="#d6d4d7" stroke-width="0.8"/></svg>
<div class="t" style="left:939.83px;top:332.00px;font-size:8.4px;color:#e4e2e5;">0</div>
<div class="a" style="left:962px;top:330px;width:48px;height:11.699999999999989px;background:#2b292c;border-radius:1px;border-bottom:1px solid #3a383b"></div>
<div class="a" style="left:1010.8px;top:330px;width:7.5px;height:11.699999999999989px;background:#4a484b;border-radius:3px;"></div>
<svg style="left:1012.3px;top:331.85px" width="4.5" height="8" viewBox="0 0 4.5 8"><path d="M0.6 2.4 L2.25 0.9 L3.9 2.4 M0.6 5.6 L2.25 7.1 L3.9 5.6" fill="none" stroke="#d6d4d7" stroke-width="0.8"/></svg>
<div class="t" style="left:1002.83px;top:332.00px;font-size:8.4px;color:#e4e2e5;">0</div>
<div class="t" style="left:914.67px;top:343.00px;font-size:7.3px;color:#cfcdd0;">Width</div>
<div class="t" style="left:974.45px;top:343.00px;font-size:7.3px;color:#cfcdd0;">Height</div>
<div class="a" style="left:899.7px;top:355.6px;width:8.4px;height:8.4px;background:#4a484b;border-radius:2px;"></div>
<div class="t" style="left:911.00px;top:356.00px;font-size:8.4px;color:#e4e2e5;">Reverses On Highlight</div>
<div class="t" style="left:867.39px;top:369.00px;font-size:7.8px;color:#cfcdd0;">Drawing</div>
<div class="a" style="left:899.7px;top:368.3px;width:8.4px;height:8.4px;background:#4a484b;border-radius:2px;"></div>
<div class="t" style="left:911.00px;top:368.00px;font-size:8.4px;color:#e4e2e5;">Shows Touch On Highlight</div>
<div class="a" style="left:899.7px;top:381.40000000000003px;width:8.4px;height:8.4px;background:#4a484b;border-radius:2px;"></div>
<svg style="left:900.5px;top:381.6px" width="7" height="7" viewBox="0 0 7 7"><path d="M1.2 3.8 L2.9 5.7 L6 1" fill="none" stroke="#f4f4f4" stroke-width="1.2"/></svg>
<div class="t" style="left:911.00px;top:381.00px;font-size:8.4px;color:#e4e2e5;">Highlighted Adjusts Image</div>
<div class="a" style="left:899.7px;top:394.2px;width:8.4px;height:8.4px;background:#4a484b;border-radius:2px;"></div>
<svg style="left:900.5px;top:394.4px" width="7" height="7" viewBox="0 0 7 7"><path d="M1.2 3.8 L2.9 5.7 L6 1" fill="none" stroke="#f4f4f4" stroke-width="1.2"/></svg>
<div class="t" style="left:911.00px;top:394.00px;font-size:8.4px;color:#e4e2e5;">Disabled Adjusts Image</div>
<div class="t" style="left:858.72px;top:409.00px;font-size:7.8px;color:#cfcdd0;">Line Break</div>
<div class="a" style="left:899.8px;top:407px;width:118.20000000000005px;height:11px;background:#59575a;border-radius:3px;"></div>
<svg style="left:1010.2px;top:409.1px" width="4.5" height="7" viewBox="0 0 4.5 7"><path d="M0.7 2.6 L2.25 1 L3.8 2.6 M0.7 4.4 L2.25 6 L3.8 4.4" fill="none" stroke="#e0dee1" stroke-width="0.8"/></svg>
<div class="t" style="left:903.70px;top:408.00px;font-size:8.4px;color:#e4e2e5;">Truncate Middle</div>
<div class="t" style="left:844.86px;top:424.00px;font-size:7.8px;color:#cfcdd0;">Drag and Drop</div>
<div class="a" style="left:899.7px;top:422.8px;width:8.4px;height:8.4px;background:#4a484b;border-radius:2px;"></div>
<div class="t" style="left:911.00px;top:423.00px;font-size:8.4px;color:#e4e2e5;">Spring Loaded</div>
<div class="a" style="left:845px;top:440px;width:173px;height:1px;background:#39363a;border-radius:0px;"></div>
<div class="t" style="left:844.00px;top:447.00px;font-size:8.6px;color:#bcbabd;font-weight:bold;">Control</div>
<div class="t" style="left:861.33px;top:465.00px;font-size:7.8px;color:#cfcdd0;">Alignment</div>
<div class="a" style="left:899px;top:461.5px;width:116.4px;height:13.1px;background:#2f2c30;border-radius:4px;"></div>
<div class="a" style="left:937px;top:461.5px;width:19px;height:13.1px;background:#5b595c;border-radius:3px;"></div>
<svg style="left:903.5px;top:463.5px" width="8.5" height="9" viewBox="0 0 8.5 9"><path d="M0.5 0 V9 M0.5 1.5 H7.5 V7.5 H0.5" fill="none" stroke="#cfcdd0" stroke-width="0.8"/><text x="4.2" y="6.3" text-anchor="middle" font-family='Liberation Sans' font-size="4.5" font-weight="bold" fill="#cfcdd0">L</text></svg>
<svg style="left:922.5px;top:463.5px" width="8.5" height="9" viewBox="0 0 8.5 9"><path d="M0.5 0 V9 M0.5 1.5 H7.5 V7.5 H0.5" fill="none" stroke="#cfcdd0" stroke-width="0.8"/></svg>
<svg style="left:941.5px;top:463.5px" width="8.5" height="9" viewBox="0 0 8.5 9"><path d="M4 0 V9 M0.5 1.5 H7.5 V7.5 H0.5 Z" fill="none" stroke="#cfcdd0" stroke-width="0.8"/></svg>
<svg style="left:961px;top:463.5px" width="8.5" height="9" viewBox="0 0 8.5 9"><path d="M7.5 0 V9 M7.5 1.5 H0.5 V7.5 H7.5" fill="none" stroke="#cfcdd0" stroke-width="0.8"/><text x="3.8" y="6.3" text-anchor="middle" font-family='Liberation Sans' font-size="4.5" font-weight="bold" fill="#cfcdd0">T</text></svg>
<svg style="left:981px;top:463.5px" width="8.5" height="9" viewBox="0 0 8.5 9"><path d="M7.5 0 V9 M7.5 1.5 H0.5 V7.5 H7.5" fill="none" stroke="#cfcdd0" stroke-width="0.8"/></svg>
<svg style="left:1001px;top:463.5px" width="8.5" height="9" viewBox="0 0 8.5 9"><rect x="0.5" y="1.5" width="7.5" height="6" fill="none" stroke="#cfcdd0" stroke-width="0.8"/><path d="M2 4.5 H6.5 M2 4.5 L3 3.5 M2 4.5 L3 5.5 M6.5 4.5 L5.5 3.5 M6.5 4.5 L5.5 5.5" fill="none" stroke="#cfcdd0" stroke-width="0.6"/></svg>
<div class="t" style="left:941.10px;top:478.00px;font-size:7.8px;color:#cfcdd0;letter-spacing:-0.011px;">Horizontal</div>
<div class="a" style="left:899px;top:486.6px;width:119px;height:12.8px;background:#2f2c30;border-radius:4px;"></div>
<div class="a" style="left:928px;top:486.6px;width:29.8px;height:12.8px;background:#5b595c;border-radius:3px;"></div>
<svg style="left:909.5px;top:488.5px" width="9" height="9" viewBox="0 0 9 9"><path d="M0 1 H9 M1.5 1 V8 H7.5 V1" fill="none" stroke="#cfcdd0" stroke-width="0.8"/></svg>
<svg style="left:938.5px;top:488.5px" width="9" height="9" viewBox="0 0 9 9"><path d="M0 4.5 H9 M1.5 1 H7.5 V8 H1.5Z" fill="none" stroke="#cfcdd0" stroke-width="0.8"/></svg>
<svg style="left:968.5px;top:488.5px" width="9" height="9" viewBox="0 0 9 9"><path d="M0 8 H9 M1.5 8 V1 H7.5 V8" fill="none" stroke="#cfcdd0" stroke-width="0.8"/></svg>
<svg style="left:999px;top:488.5px" width="9" height="9" viewBox="0 0 9 9"><rect x="1" y="1" width="7" height="7" fill="none" stroke="#cfcdd0" stroke-width="0.8"/><path d="M4.5 1 V8 M2.8 3 V6 M6.2 3 V6" fill="none" stroke="#cfcdd0" stroke-width="0.6"/></svg>
<div class="t" style="left:945.81px;top:503.00px;font-size:7.8px;color:#cfcdd0;">Vertical</div>
<div class="a" style="left:845px;top:512.3px;width:173px;height:1px;background:#39363a;border-radius:0px;"></div>
<div class="t" style="left:877.78px;top:517.00px;font-size:7.8px;color:#cfcdd0;">State</div>
<div class="a" style="left:899.7px;top:516.4px;width:8.4px;height:8.4px;background:#4a484b;border-radius:2px;"></div>
<div class="t" style="left:911.00px;top:516.00px;font-size:8.4px;color:#e4e2e5;">Selected</div>
<div class="a" style="left:899.7px;top:529.3px;width:8.4px;height:8.4px;background:#4a484b;border-radius:2px;"></div>
<svg style="left:900.5px;top:529.5px" width="7" height="7" viewBox="0 0 7 7"><path d="M1.2 3.8 L2.9 5.7 L6 1" fill="none" stroke="#f4f4f4" stroke-width="1.2"/></svg>
<div class="t" style="left:911.00px;top:529.00px;font-size:8.4px;color:#e4e2e5;">Enabled</div>
<div class="a" style="left:899.7px;top:542.0999999999999px;width:8.4px;height:8.4px;background:#4a484b;border-radius:2px;"></div>
<div class="t" style="left:911.00px;top:542.00px;font-size:8.4px;color:#e4e2e5;">Highlighted</div>
<div class="a" style="left:845px;top:559.6px;width:173px;height:1px;background:#39363a;border-radius:0px;"></div>
<div class="t" style="left:844.00px;top:565.00px;font-size:8.6px;color:#bcbabd;font-weight:bold;">View</div>
<div class="t" style="left:847.02px;top:585.00px;font-size:7.8px;color:#cfcdd0;">Content Mode</div>
<div class="a" style="left:899.8px;top:582.5px;width:118.20000000000005px;height:11.299999999999955px;background:#59575a;border-radius:3px;"></div>
<svg style="left:1010.2px;top:584.75px" width="4.5" height="7" viewBox="0 0 4.5 7"><path d="M0.7 2.6 L2.25 1 L3.8 2.6 M0.7 4.4 L2.25 6 L3.8 4.4" fill="none" stroke="#e0dee1" stroke-width="0.8"/></svg>
<div class="t" style="left:903.70px;top:584.00px;font-size:8.4px;color:#e4e2e5;">Scale To Fill</div>
<div class="t" style="left:863.48px;top:601.00px;font-size:7.8px;color:#cfcdd0;">Semantic</div>
<div class="a" style="left:899.8px;top:598px;width:118.20000000000005px;height:11.399999999999977px;background:#59575a;border-radius:3px;"></div>
<svg style="left:1010.2px;top:600.3000000000001px" width="4.5" height="7" viewBox="0 0 4.5 7"><path d="M0.7 2.6 L2.25 1 L3.8 2.6 M0.7 4.4 L2.25 6 L3.8 4.4" fill="none" stroke="#e0dee1" stroke-width="0.8"/></svg>
<div class="t" style="left:903.70px;top:600.00px;font-size:8.4px;color:#e4e2e5;">Unspecified</div>
<div class="t" style="left:883.42px;top:617.00px;font-size:7.8px;color:#cfcdd0;">Tag</div>
<div class="a" style="left:899.7px;top:614px;width:110.29999999999995px;height:11.600000000000023px;background:#2b292c;border-radius:1px;border-bottom:1px solid #3a383b"></div>
<div class="a" style="left:1010.8px;top:614px;width:7.5px;height:11.600000000000023px;background:#4a484b;border-radius:3px;"></div>
<svg style="left:1012.3px;top:615.8px" width="4.5" height="8" viewBox="0 0 4.5 8"><path d="M0.6 2.4 L2.25 0.9 L3.9 2.4 M0.6 5.6 L2.25 7.1 L3.9 5.6" fill="none" stroke="#d6d4d7" stroke-width="0.8"/></svg>
<div class="t" style="left:1002.83px;top:616.00px;font-size:8.4px;color:#e4e2e5;">0</div>
<div class="a" style="left:845px;top:630.2px;width:173px;height:1px;background:#39363a;border-radius:0px;"></div>
<div class="t" style="left:859.58px;top:635.00px;font-size:7.8px;color:#cfcdd0;">Interaction</div>
<div class="a" style="left:899.7px;top:634.3px;width:8.4px;height:8.4px;background:#4a484b;border-radius:2px;"></div>
<svg style="left:900.5px;top:634.5px" width="7" height="7" viewBox="0 0 7 7"><path d="M1.2 3.8 L2.9 5.7 L6 1" fill="none" stroke="#f4f4f4" stroke-width="1.2"/></svg>
<div class="t" style="left:911.00px;top:634.00px;font-size:8.4px;color:#e4e2e5;">User Interaction Enabled</div>
</div></body></html>
